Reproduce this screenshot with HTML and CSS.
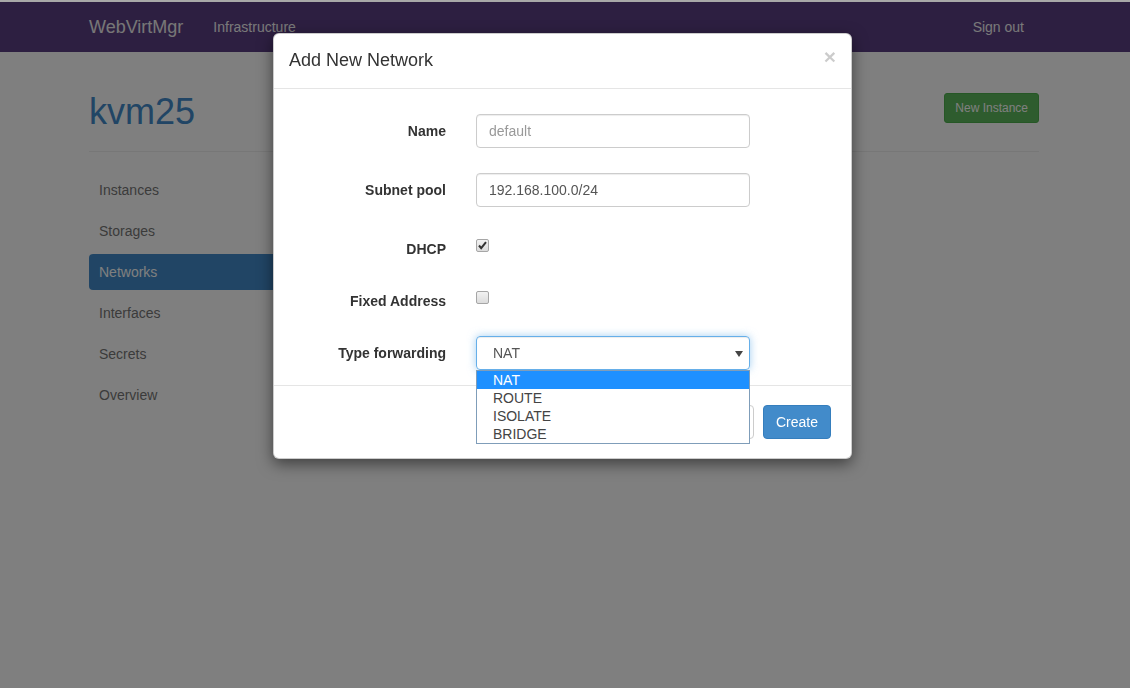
FILE: index.html
```html
<!DOCTYPE html>
<html>
<head>
<meta charset="utf-8">
<title>WebVirtMgr</title>
<link rel="stylesheet" href="styles.css">
</head>
<body>
<div class="topline"></div>
<nav class="navbar">
  <div class="container nav-inner">
    <a class="brand">WebVirtMgr</a>
    <a class="nav-link">Infrastructure</a>
    <span class="spacer"></span>
    <a class="nav-link">Sign out</a>
  </div>
</nav>
<div class="container">
  <div class="page-header">
    <h1>kvm25</h1>
    <a class="btn btn-success btn-sm">New Instance</a>
  </div>
  <div class="layout">
    <ul class="pills">
      <li><a>Instances</a></li>
      <li><a>Storages</a></li>
      <li class="active"><a>Networks</a></li>
      <li><a>Interfaces</a></li>
      <li><a>Secrets</a></li>
      <li><a>Overview</a></li>
    </ul>
    <div class="main"></div>
  </div>
</div>

<div class="backdrop"></div>

<div class="modal">
  <div class="modal-header">
    <span class="close">&times;</span>
    <h4 class="modal-title">Add New Network</h4>
  </div>
  <div class="modal-body">
    <div class="form-row">
      <label class="control-label">Name</label>
      <div class="control"><input class="form-control" type="text" placeholder="default"></div>
    </div>
    <div class="form-row">
      <label class="control-label">Subnet pool</label>
      <div class="control"><input class="form-control" type="text" value="192.168.100.0/24"></div>
    </div>
    <div class="form-row check-row">
      <label class="control-label">DHCP</label>
      <div class="control"><span class="checkbox checked"><svg viewBox="0 0 13 13" width="13" height="13"><path d="M3 6.5 L5.2 9.2 L10 3.2" fill="none" stroke="#333" stroke-width="2"/></svg></span></div>
    </div>
    <div class="form-row check-row">
      <label class="control-label">Fixed Address</label>
      <div class="control"><span class="checkbox"></span></div>
    </div>
    <div class="form-row">
      <label class="control-label">Type forwarding</label>
      <div class="control">
        <div class="select">
          <span>NAT</span>
          <svg class="caret" viewBox="0 0 8 6" width="8" height="6"><path d="M0 0 L8 0 L4 6 Z" fill="#444"/></svg>
        </div>
        <ul class="dropdown">
          <li class="hl">NAT</li>
          <li>ROUTE</li>
          <li>ISOLATE</li>
          <li>BRIDGE</li>
        </ul>
      </div>
    </div>
  </div>
  <div class="modal-footer">
    <a class="btn btn-default">Close</a>
    <a class="btn btn-primary">Create</a>
  </div>
</div>
</body>
</html>
```
FILE: styles.css
```css
* { box-sizing: border-box; }
html, body { height: 100%; }
body {
  margin: 0;
  font-family: "Liberation Sans", Arial, Helvetica, sans-serif;
  font-size: 14px;
  line-height: 20px;
  color: #333;
  background: #fff;
}
a { cursor: pointer; text-decoration: none; }
ul { list-style: none; margin: 0; padding: 0; }

.topline { height: 2px; background: #a8a8a8; }

.container {
  width: 950px;
  margin-left: calc(50% - 476px);
}

.navbar { height: 50px; background: #5a3e82; }
.nav-inner { display: flex; align-items: center; height: 50px; }
.brand {
  font-size: 18px;
  line-height: 20px;
  padding: 15px 15px 15px 0;
  color: #eeeeee;
}
.nav-link {
  padding: 15px;
  line-height: 20px;
  color: #f2f2f2;
}
.spacer { flex: 1; }

.page-header {
  display: flex;
  justify-content: space-between;
  align-items: flex-start;
  margin: 40px 0 20px;
  padding-bottom: 19px;
  border-bottom: 1px solid #eee;
}
.page-header h1 {
  margin: 0;
  font-size: 36px;
  line-height: 40px;
  font-weight: normal;
  color: #428bca;
}
.btn {
  display: inline-block;
  border: 1px solid transparent;
  border-radius: 4px;
  padding: 6px 12px;
  font-size: 14px;
  line-height: 20px;
  white-space: nowrap;
}
.btn-sm {
  padding: 5px 10px;
  font-size: 12px;
  line-height: 18px;
  border-radius: 3px;
  margin-top: 1px;
}
.btn-success { background: #5cb85c; border-color: #4cae4c; color: #fff; }
.btn-default { background: #fff; border-color: #ccc; color: #333; }
.btn-primary { background: #428bca; border-color: #357ebd; color: #fff; }

.layout { display: flex; gap: 30px; }
.pills { width: 215px; display: flex; flex-direction: column; gap: 5px; }
.pills a {
  display: block;
  padding: 8px 10px;
  line-height: 20px;
  color: #777;
  border-radius: 4px;
}
.pills .active a { background: #428bca; color: #fff; }
.main { flex: 1; }

.backdrop {
  position: fixed;
  top: 2px; left: 0; right: 0; bottom: 0;
  background: rgba(0, 0, 0, 0.5);
}

.modal {
  position: absolute;
  top: 33px;
  left: calc(50% - 292px);
  width: 579px;
  background: #fff;
  border: 1px solid rgba(0, 0, 0, 0.2);
  border-radius: 6px;
  box-shadow: 0 5px 15px rgba(0, 0, 0, 0.5);
}
.modal-header {
  padding: 14px 15px 15px;
  border-bottom: 1px solid #e5e5e5;
}
.modal-title {
  margin: 0;
  font-size: 18px;
  line-height: 25px;
  font-weight: normal;
  color: #333;
}
.close {
  float: right;
  font-size: 21px;
  font-weight: bold;
  line-height: 21px;
  margin-top: -2px;
  color: #000;
  opacity: 0.2;
}

.modal-body {
  padding: 25px 20px 15px;
  display: flex;
  flex-direction: column;
  gap: 25px;
}
.form-row { display: flex; align-items: flex-start; gap: 30px; }
.control-label {
  width: 152px;
  text-align: right;
  font-weight: bold;
  padding-top: 7px;
  line-height: 20px;
  color: #333;
}
.control { width: 274px; position: relative; }
.form-control {
  display: block;
  width: 100%;
  height: 34px;
  padding: 6px 12px;
  font-family: inherit;
  font-size: 14px;
  line-height: 20px;
  color: #555;
  background: #fff;
  border: 1px solid #ccc;
  border-radius: 4px;
  box-shadow: inset 0 1px 1px rgba(0, 0, 0, 0.075);
  outline: none;
}
.form-control::placeholder { color: #999; }

.check-row { height: 27px; }
.checkbox {
  display: block;
  width: 13px;
  height: 13px;
  margin-top: 7px;
  border: 1px solid #a6a6a6;
  border-radius: 2px;
  background: linear-gradient(#f2f2f2, #dcdcdc);
  position: relative;
}
.checkbox svg { position: absolute; left: -1px; top: -1px; }

.select {
  height: 34px;
  display: flex;
  align-items: center;
  justify-content: space-between;
  padding: 0 6px 0 16px;
  border: 1px solid #66afe9;
  border-radius: 4px;
  color: #555;
  box-shadow: inset 0 1px 1px rgba(0, 0, 0, 0.075), 0 0 8px rgba(102, 175, 233, 0.6);
}
.caret { margin-top: 1px; }
.dropdown {
  position: absolute;
  top: 34px;
  left: 0;
  width: 274px;
  background: #fff;
  border: 1px solid #7f9db9;
  z-index: 5;
}
.dropdown li {
  padding-left: 16px;
  line-height: 18px;
  height: 18px;
  color: #444;
}
.dropdown li.hl { background: #1e90ff; color: #fff; }

.modal-footer {
  padding: 19px 20px 19px;
  border-top: 1px solid #e5e5e5;
  display: flex;
  justify-content: flex-end;
  gap: 9px;
}
```
